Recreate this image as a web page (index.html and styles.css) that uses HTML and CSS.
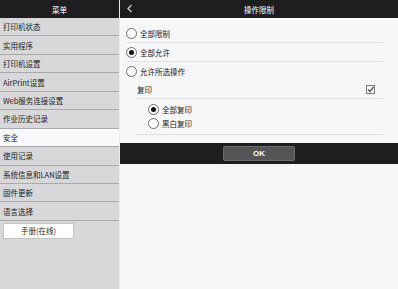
FILE: index.html
```html
<!DOCTYPE html>
<html lang="zh-CN">
<head>
  <meta charset="UTF-8" />
  <title>操作限制</title>
  <link rel="stylesheet" href="styles.css">
</head>
<body>
  <aside class="menu">
    <div class="menu-head">菜单</div>
    <ul class="menu-list">
      <li>打印机状态</li>
      <li>实用程序</li>
      <li>打印机设置</li>
      <li>AirPrint设置</li>
      <li>Web服务连接设置</li>
      <li>作业历史记录</li>
      <li class="active">安全</li>
      <li>使用记录</li>
      <li>系统信息和LAN设置</li>
      <li>固件更新</li>
      <li>语言选择</li>
    </ul>
    <button class="manual">手册(在线)</button>
  </aside>

  <main class="panel">
    <div class="panel-head">
      <span class="back">
        <svg width="7" height="9" viewBox="0 0 7 9"><path d="M5.5 1 L2 4.5 L5.5 8" fill="none" stroke="#c8c8ca" stroke-width="1.4"/></svg>
      </span>
      <span class="title">操作限制</span>
    </div>

    <div class="options">
      <label class="opt line"><span class="radio"></span>全部限制</label>
      <label class="opt line"><span class="radio on"></span>全部允许</label>
      <label class="opt"><span class="radio"></span>允许所选操作</label>
      <div class="copy">
        <span>复印</span>
        <svg class="check" width="9" height="9" viewBox="0 0 9 9">
          <rect x="0.5" y="0.5" width="8" height="8" fill="#f4f4f6" stroke="#7a7a7c"/>
          <path d="M2 4.5 L4 6.5 L7.5 2" fill="none" stroke="#555" stroke-width="1.3"/>
        </svg>
      </div>
      <div class="sub">
        <label class="opt small"><span class="radio on"></span>全部复印</label>
        <label class="opt small"><span class="radio"></span>黑白复印</label>
      </div>
    </div>

    <div class="bar">
      <button class="ok">OK</button>
    </div>
  </main>
</body>
</html>
```

FILE: styles.css
```css
body {
  margin: 0;
  width: 398px;
  height: 289px;
  display: flex;
  font-family: "Noto Sans CJK SC", "Noto Sans", sans-serif;
  font-size: 7.5px;
  color: #222;
  background: #f7f6f9;
  overflow: hidden;
}
.menu {
  width: 119px;
  background: #d8d8da;
  border-right: 1px solid #ececee;
  display: flex;
  flex-direction: column;
}
.menu-head, .panel-head {
  height: 18px;
  background: #1e1e20;
  color: #fff;
  display: flex;
  align-items: center;
  font-size: 7.5px;
}
.menu-head {
  justify-content: center;
}
.menu-list {
  list-style: none;
  margin: 0;
  padding: 0;
}
.menu-list li {
  box-sizing: border-box;
  height: 18.45px;
  padding-left: 3px;
  display: flex;
  align-items: center;
  border-bottom: 1px solid #a9a9ab;
}
.menu-list li.active {
  background: #f9f9fb;
}
.manual {
  margin: 2px 0 0 3px;
  width: 71px;
  height: 16px;
  padding: 0;
  background: #fff;
  border: 1px solid #c4c4c6;
  border-radius: 1px;
  font-family: inherit;
  font-size: 7.5px;
  color: #222;
}
.panel {
  flex: 1;
  display: flex;
  flex-direction: column;
}
.panel-head {
  position: relative;
  justify-content: center;
}
.back {
  position: absolute;
  left: 6px;
  top: 4px;
}
.options {
  margin: 6px 15px 0 6px;
}
.opt {
  box-sizing: border-box;
  height: 19px;
  display: flex;
  align-items: center;
  gap: 3px;
}
.opt.line {
  border-bottom: 1px solid #e2e2e6;
}
.radio {
  box-sizing: border-box;
  width: 11px;
  height: 11px;
  border: 1px solid #6e6e70;
  border-radius: 50%;
  background: #fff;
  display: flex;
  align-items: center;
  justify-content: center;
}
.radio.on::after {
  content: "";
  width: 5px;
  height: 5px;
  border-radius: 50%;
  background: #111;
}
.copy {
  box-sizing: border-box;
  height: 18px;
  margin-left: 10px;
  padding: 0 8px 0 1px;
  display: flex;
  align-items: center;
  justify-content: space-between;
  border-bottom: 1px solid #e2e2e6;
}
.sub {
  margin-left: 10px;
  padding: 3px 0 4px 12px;
  border-bottom: 1px solid #e2e2e6;
}
.opt.small {
  height: 14px;
}
.bar {
  margin-top: 8px;
  height: 21px;
  background: #1e1e20;
  display: flex;
  align-items: center;
  justify-content: center;
}
.ok {
  width: 72px;
  height: 15px;
  padding: 0;
  background: #555557;
  border: 1px solid #6c6c6e;
  border-radius: 2px;
  color: #fff;
  font-family: "Liberation Sans", sans-serif;
  font-weight: bold;
  font-size: 8px;
}
```
